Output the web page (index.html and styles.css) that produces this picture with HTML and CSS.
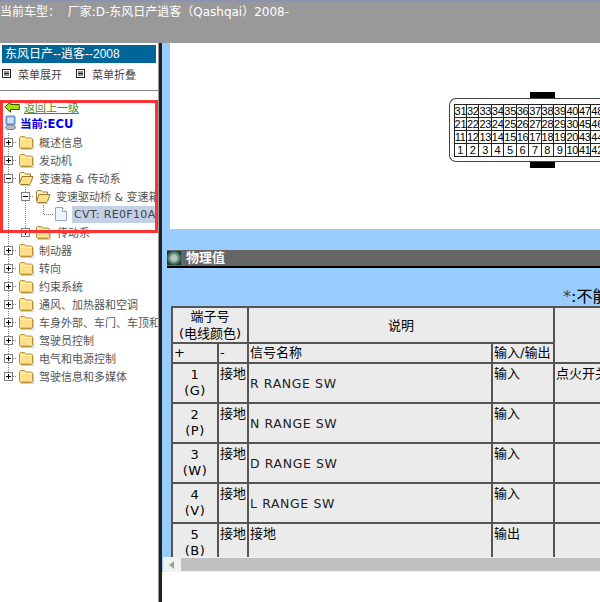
FILE: index.html
```html
<!DOCTYPE html>
<html lang="zh">
<head>
<meta charset="utf-8">
<title>物理值</title>
<link rel="stylesheet" href="styles.css">
</head>
<body>
<svg class="defs" aria-hidden="true">
  <defs>
    <symbol id="v" viewBox="0 0 17 18"><path d="M8.5 0V18" class="dot"/></symbol>
    <symbol id="tee" viewBox="0 0 20 18"><path d="M9.5 0V9.5H20" class="dot"/></symbol>
    <symbol id="plus" viewBox="0 0 17 18"><path d="M8.5 0V18M13 9.5H17" class="dot"/><rect x="4.5" y="5.5" width="8" height="8" fill="#fff" stroke="#808080"/><path d="M6 9.5H11M8.5 7V12" stroke="#000" fill="none"/></symbol>
    <symbol id="plusend" viewBox="0 0 17 18"><path d="M8.5 0V5M13 9.5H17" class="dot"/><rect x="4.5" y="5.5" width="8" height="8" fill="#fff" stroke="#808080"/><path d="M6 9.5H11M8.5 7V12" stroke="#000" fill="none"/></symbol>
    <symbol id="minus" viewBox="0 0 17 18"><path d="M8.5 0V18M13 9.5H17" class="dot"/><rect x="4.5" y="5.5" width="8" height="8" fill="#fff" stroke="#808080"/><path d="M6 9.5H11" stroke="#000" fill="none"/></symbol>
    <symbol id="folder" viewBox="0 0 16 16"><path d="M1.5 13.5V3.5L2.5 2.5H6.5L8 4H13.5L14.5 5V13.5L13.5 14.5H2.5Z" fill="#ffe08a" stroke="#b8923a"/><path d="M2.5 5.5H13.5" stroke="#fff6d0" fill="none"/><path d="M2.5 13.5H13.5" stroke="#f5c04a" fill="none"/><path d="M3 15.5H15.5V6" stroke="#cfcfcf" fill="none"/></symbol>
    <symbol id="folderopen" viewBox="0 0 16 16"><path d="M1.5 12.5V3.5L2.5 2.5H6L7.5 4H12.5V6.5" fill="#fff2c4" stroke="#9a7a30"/><path d="M1.5 13.5L4 6.5H15L12.5 13.5L11.5 14.5H2.5Z" fill="#ffdf86" stroke="#9a7a30"/><path d="M3 15.5H13" stroke="#cfcfcf" fill="none"/></symbol>
    <symbol id="doc" viewBox="0 0 14 16"><path d="M1.5 1.5H8.5L12.5 5.5V14.5H1.5Z" fill="#eef3fc" stroke="#8ea4cc"/><path d="M8.5 1.5V5.5H12.5" fill="#fff" stroke="#8ea4cc"/></symbol>
    <symbol id="menuicon" viewBox="0 0 9 9"><rect x=".5" y=".5" width="8" height="8" fill="#fff" stroke="#222"/><path d="M2 3H7M2 4.5H7M2 6H7" stroke="#222" fill="none"/></symbol>
  </defs>
</svg>

<header class="topbar">当前车型：&nbsp; 厂家:D-东风日产逍客（Qashqai）2008-</header>

<div class="main">
  <aside class="side">
    <div class="brand">东风日产--逍客--2008</div>
    <div class="menu">
      <span class="menu-item"><svg class="mi"><use href="#menuicon"/></svg>菜单展开</span>
      <span class="menu-item"><svg class="mi"><use href="#menuicon"/></svg>菜单折叠</span>
    </div>
    <div class="tree">
      <a class="back">
        <svg class="arrow" viewBox="0 0 16 12"><path d="M.8 6L6.5.8V3.5H15.3V8.5H6.5V11.2Z" fill="#a6e000" stroke="#2f5a00"/></svg>
        <span class="back-label">返回上一级</span>
      </a>
      <div class="current">
        <svg class="monitor" viewBox="0 0 13 15"><rect x="2" y="1" width="9" height="9" rx="1" fill="#7fb2ee" stroke="#5f7fb8"/><rect x="3.5" y="2.5" width="6" height="5.5" fill="#cfe4fb"/><path d="M1 12.5L4 10H9L12 12.5L9.5 14.5H3Z" fill="#b3bccb" stroke="#6d7a90"/></svg>
        <b>当前:ECU</b>
      </div>
      <div class="row"><svg class="tw"><use href="#plus"/></svg><svg class="fd"><use href="#folder"/></svg><span class="lb">概述信息</span></div>
      <div class="row"><svg class="tw"><use href="#plus"/></svg><svg class="fd"><use href="#folder"/></svg><span class="lb">发动机</span></div>
      <div class="row"><svg class="tw"><use href="#minus"/></svg><svg class="fd"><use href="#folderopen"/></svg><span class="lb">变速箱 &amp; 传动系</span></div>
      <div class="row"><svg class="tw"><use href="#v"/></svg><svg class="tw"><use href="#minus"/></svg><svg class="fd"><use href="#folderopen"/></svg><span class="lb">变速驱动桥 &amp; 变速箱</span></div>
      <div class="row"><svg class="tw"><use href="#v"/></svg><svg class="tw"><use href="#v"/></svg><svg class="tee"><use href="#tee"/></svg><svg class="dc"><use href="#doc"/></svg><span class="sel">CVT: RE0F10A</span></div>
      <div class="row"><svg class="tw"><use href="#v"/></svg><svg class="tw"><use href="#plusend"/></svg><svg class="fd"><use href="#folder"/></svg><span class="lb lb2">传动系</span></div>
      <div class="row"><svg class="tw"><use href="#plus"/></svg><svg class="fd"><use href="#folder"/></svg><span class="lb">制动器</span></div>
      <div class="row"><svg class="tw"><use href="#plus"/></svg><svg class="fd"><use href="#folder"/></svg><span class="lb">转向</span></div>
      <div class="row"><svg class="tw"><use href="#plus"/></svg><svg class="fd"><use href="#folder"/></svg><span class="lb">约束系统</span></div>
      <div class="row"><svg class="tw"><use href="#plus"/></svg><svg class="fd"><use href="#folder"/></svg><span class="lb">通风、加热器和空调</span></div>
      <div class="row"><svg class="tw"><use href="#plus"/></svg><svg class="fd"><use href="#folder"/></svg><span class="lb">车身外部、车门、车顶和车辆</span></div>
      <div class="row"><svg class="tw"><use href="#plus"/></svg><svg class="fd"><use href="#folder"/></svg><span class="lb">驾驶员控制</span></div>
      <div class="row"><svg class="tw"><use href="#plus"/></svg><svg class="fd"><use href="#folder"/></svg><span class="lb">电气和电源控制</span></div>
      <div class="row"><svg class="tw"><use href="#plusend"/></svg><svg class="fd"><use href="#folder"/></svg><span class="lb">驾驶信息和多媒体</span></div>
    </div>
    <div class="redbox"></div>
  </aside>

  <div class="splitter"></div>

  <section class="pane">
    <div class="scroller">
      <div class="figure">
        <div class="connector">
          <i class="tab tab-top"></i>
          <div class="pins">
            <span>31</span><span>32</span><span>33</span><span>34</span><span>35</span><span>36</span><span>37</span><span>38</span><span>39</span><span>40</span><span>47</span><span>48</span>
            <span>21</span><span>22</span><span>23</span><span>24</span><span>25</span><span>26</span><span>27</span><span>28</span><span>29</span><span>30</span><span>45</span><span>46</span>
            <span>11</span><span>12</span><span>13</span><span>14</span><span>15</span><span>16</span><span>17</span><span>18</span><span>19</span><span>20</span><span>43</span><span>44</span>
            <span>1</span><span>2</span><span>3</span><span>4</span><span>5</span><span>6</span><span>7</span><span>8</span><span>9</span><span>10</span><span>41</span><span>42</span>
          </div>
          <i class="tab tab-bottom"></i>
        </div>
      </div>

      <h2 class="bar"><i class="bullet"></i>物理值</h2>
      <p class="note"><span class="star">*</span>:不能</p>

      <table class="data">
        <colgroup><col class="c1"><col class="c2"><col class="c3"><col class="c4"><col class="c5"></colgroup>
        <tr class="r-head">
          <td colspan="2" class="ctr">端子号<br>(电线颜色)</td>
          <td colspan="2" class="ctr">说明</td>
          <td rowspan="2"></td>
        </tr>
        <tr class="r-sub">
          <td class="sub">+</td><td class="sub">-</td><td class="sub">信号名称</td><td class="sub">输入/输出</td>
        </tr>
        <tr class="r-data">
          <td class="ctr mid">1<br>(G)</td><td>接地</td><td class="sig">R RANGE SW</td><td>输入</td><td>点火开关</td>
        </tr>
        <tr class="r-data">
          <td class="ctr mid">2<br>(P)</td><td>接地</td><td class="sig">N RANGE SW</td><td>输入</td><td></td>
        </tr>
        <tr class="r-data">
          <td class="ctr mid">3<br>(W)</td><td>接地</td><td class="sig">D RANGE SW</td><td>输入</td><td></td>
        </tr>
        <tr class="r-data">
          <td class="ctr mid">4<br>(V)</td><td>接地</td><td class="sig">L RANGE SW</td><td>输入</td><td></td>
        </tr>
        <tr class="r-data">
          <td class="ctr mid">5<br>(B)</td><td>接地</td><td>接地</td><td>输出</td><td></td>
        </tr>
      </table>
    </div>
    <div class="hscroll">
      <span class="hs-btn"><svg class="hs-arrow" viewBox="0 0 6 8"><path d="M5 0V8L0 4Z" fill="#a0a0a0"/></svg></span>
      <span class="hs-thumb"></span>
    </div>
  </section>
</div>
</body>
</html>
```
FILE: styles.css
```css
* { box-sizing: border-box; }
html, body { margin: 0; height: 100%; overflow: hidden; background: #fff; }
body { font-family: "DejaVu Sans", "Noto Sans CJK SC", sans-serif; font-size: 11px; color: #000; }
.defs { display: none; }
.dot { fill: none; stroke: #808080; stroke-dasharray: 1 1; }
.topbar { height: 43px; background: #999; border-top: 2px solid #8b93b5; padding-top: 2px; color: #fff; font: 12px/16px "DejaVu Sans", "Noto Sans CJK SC", sans-serif; white-space: nowrap; overflow: hidden; }
.main { display: flex; height: 559px; }
.side { position: relative; width: 158px; flex: none; padding: 2px 2px 0; background: #fff; }
.brand { height: 18px; background: #006699; color: #fff; font: 12px/18px "Liberation Sans", "Noto Sans CJK SC", sans-serif; padding-left: 3px; }
.menu { height: 28px; margin: 0 -2px; padding: 0 0 6px 2px; border-bottom: 1px solid #888; display: flex; gap: 14px; align-items: center; color: #444; }
.menu-item { display: flex; align-items: center; gap: 7px; }
.mi { width: 9px; height: 9px; }
.tree { margin: 0 -2px; padding-top: 9px; }
.back { display: flex; align-items: center; height: 14px; padding-left: 4px; gap: 4px; }
.arrow { width: 16px; height: 12px; flex: none; }
.back-label { color: #4f8a10; text-decoration: underline; }
.current { display: flex; align-items: center; height: 17px; padding-left: 4px; gap: 3px; color: #0000ee; font-size: 11.5px; margin-bottom: 2px; }
.monitor { width: 13px; height: 15px; flex: none; }
.row { display: flex; align-items: center; height: 18px; white-space: nowrap; overflow: hidden; color: #555; }
.tw { width: 17px; height: 18px; flex: none; display: block; }
.tee { width: 20px; height: 18px; flex: none; display: block; }
.fd { width: 16px; height: 16px; flex: none; margin: 0 5px 0 1px; }
.dc { width: 14px; height: 16px; flex: none; margin-right: 4px; }
.lb { color: #555; }
.lb2 { margin-left: 1px; }
.sel { background: #c2d0e8; height: 17px; line-height: 17px; padding-left: 2px; color: #444; flex: 1; overflow: hidden; letter-spacing: .35px; }
.redbox { position: absolute; left: 0; top: 57px; width: 158px; height: 133px; border: 3px solid #f33; pointer-events: none; }
.splitter { width: 4px; flex: none; background: #222; border-left: 1px solid #999; }
.pane { flex: 1; min-width: 0; background: #fff; overflow: hidden; }
.scroller { height: 514px; background: #9cf; overflow: hidden; }
.figure { margin-left: 8px; height: 186px; background: #fff; padding: 55px 0 0 279px; }
.connector { position: relative; width: 190px; height: 64px; border: 1.5px solid #444; border-right: 0; border-radius: 7px 0 0 7px; padding: 5px 0 0 3.5px; }
.tab { position: absolute; left: 80px; width: 25px; height: 6px; background: #000; }
.tab-top { top: -7px; }
.tab-bottom { bottom: -7px; }
.pins { display: grid; grid-template-columns: repeat(12, 12.45px); grid-auto-rows: 13px; border-top: 1px solid #222; border-left: 1px solid #222; }
.pins span { border-right: 1px solid #222; border-bottom: 1px solid #222; font: 11px/12px "Liberation Sans", sans-serif; letter-spacing: -.2px; text-align: center; }
.bar { display: flex; align-items: center; height: 18px; margin: 21px 0 0 5px; background: #666; border-bottom: 2px solid #000; color: #fff; font-size: 13px; font-weight: bold; line-height: 16px; }
.bullet { width: 14px; height: 14px; margin-right: 5px; background: radial-gradient(circle, #b4c8c0 0 25%, #5f8a78 50%, #123a2a 80%); }
.note { margin: 0; height: 38px; padding: 20px 0 0 401px; font-size: 16px; line-height: 18px; white-space: nowrap; }
.star { color: #345; font-weight: normal; }
.data { width: 582px; margin-left: 9px; table-layout: fixed; border-collapse: collapse; background: #ebebeb; font-size: 13px; line-height: 18px; }
.c1 { width: 46px; }
.c2 { width: 30px; }
.c3 { width: 244px; }
.c4 { width: 62px; }
.c5 { width: 200px; }
.data td { border: 2px solid #555; padding: 1px 1px 0; vertical-align: top; white-space: nowrap; overflow: hidden; }
.data .ctr { text-align: center; vertical-align: middle; line-height: 17px; padding-top: 0; }
.data .mid { line-height: 16px; letter-spacing: .5px; }
.r-head { height: 36px; }
.r-sub { height: 20px; }
.r-data { height: 40px; }
.data .sub { vertical-align: middle; line-height: 16px; padding-top: 0; }
.data .sig { vertical-align: middle; font-size: 12.5px; letter-spacing: .6px; color: #222; }
.hscroll { display: flex; height: 15px; border-left: 1px solid #9cf; background: #f1f1f1; padding: 1px 0; }
.hs-btn { width: 18px; flex: none; display: flex; align-items: center; justify-content: center; }
.hs-arrow { width: 6px; height: 8px; }
.hs-thumb { flex: 1; background: #c0c0c0; }
```
